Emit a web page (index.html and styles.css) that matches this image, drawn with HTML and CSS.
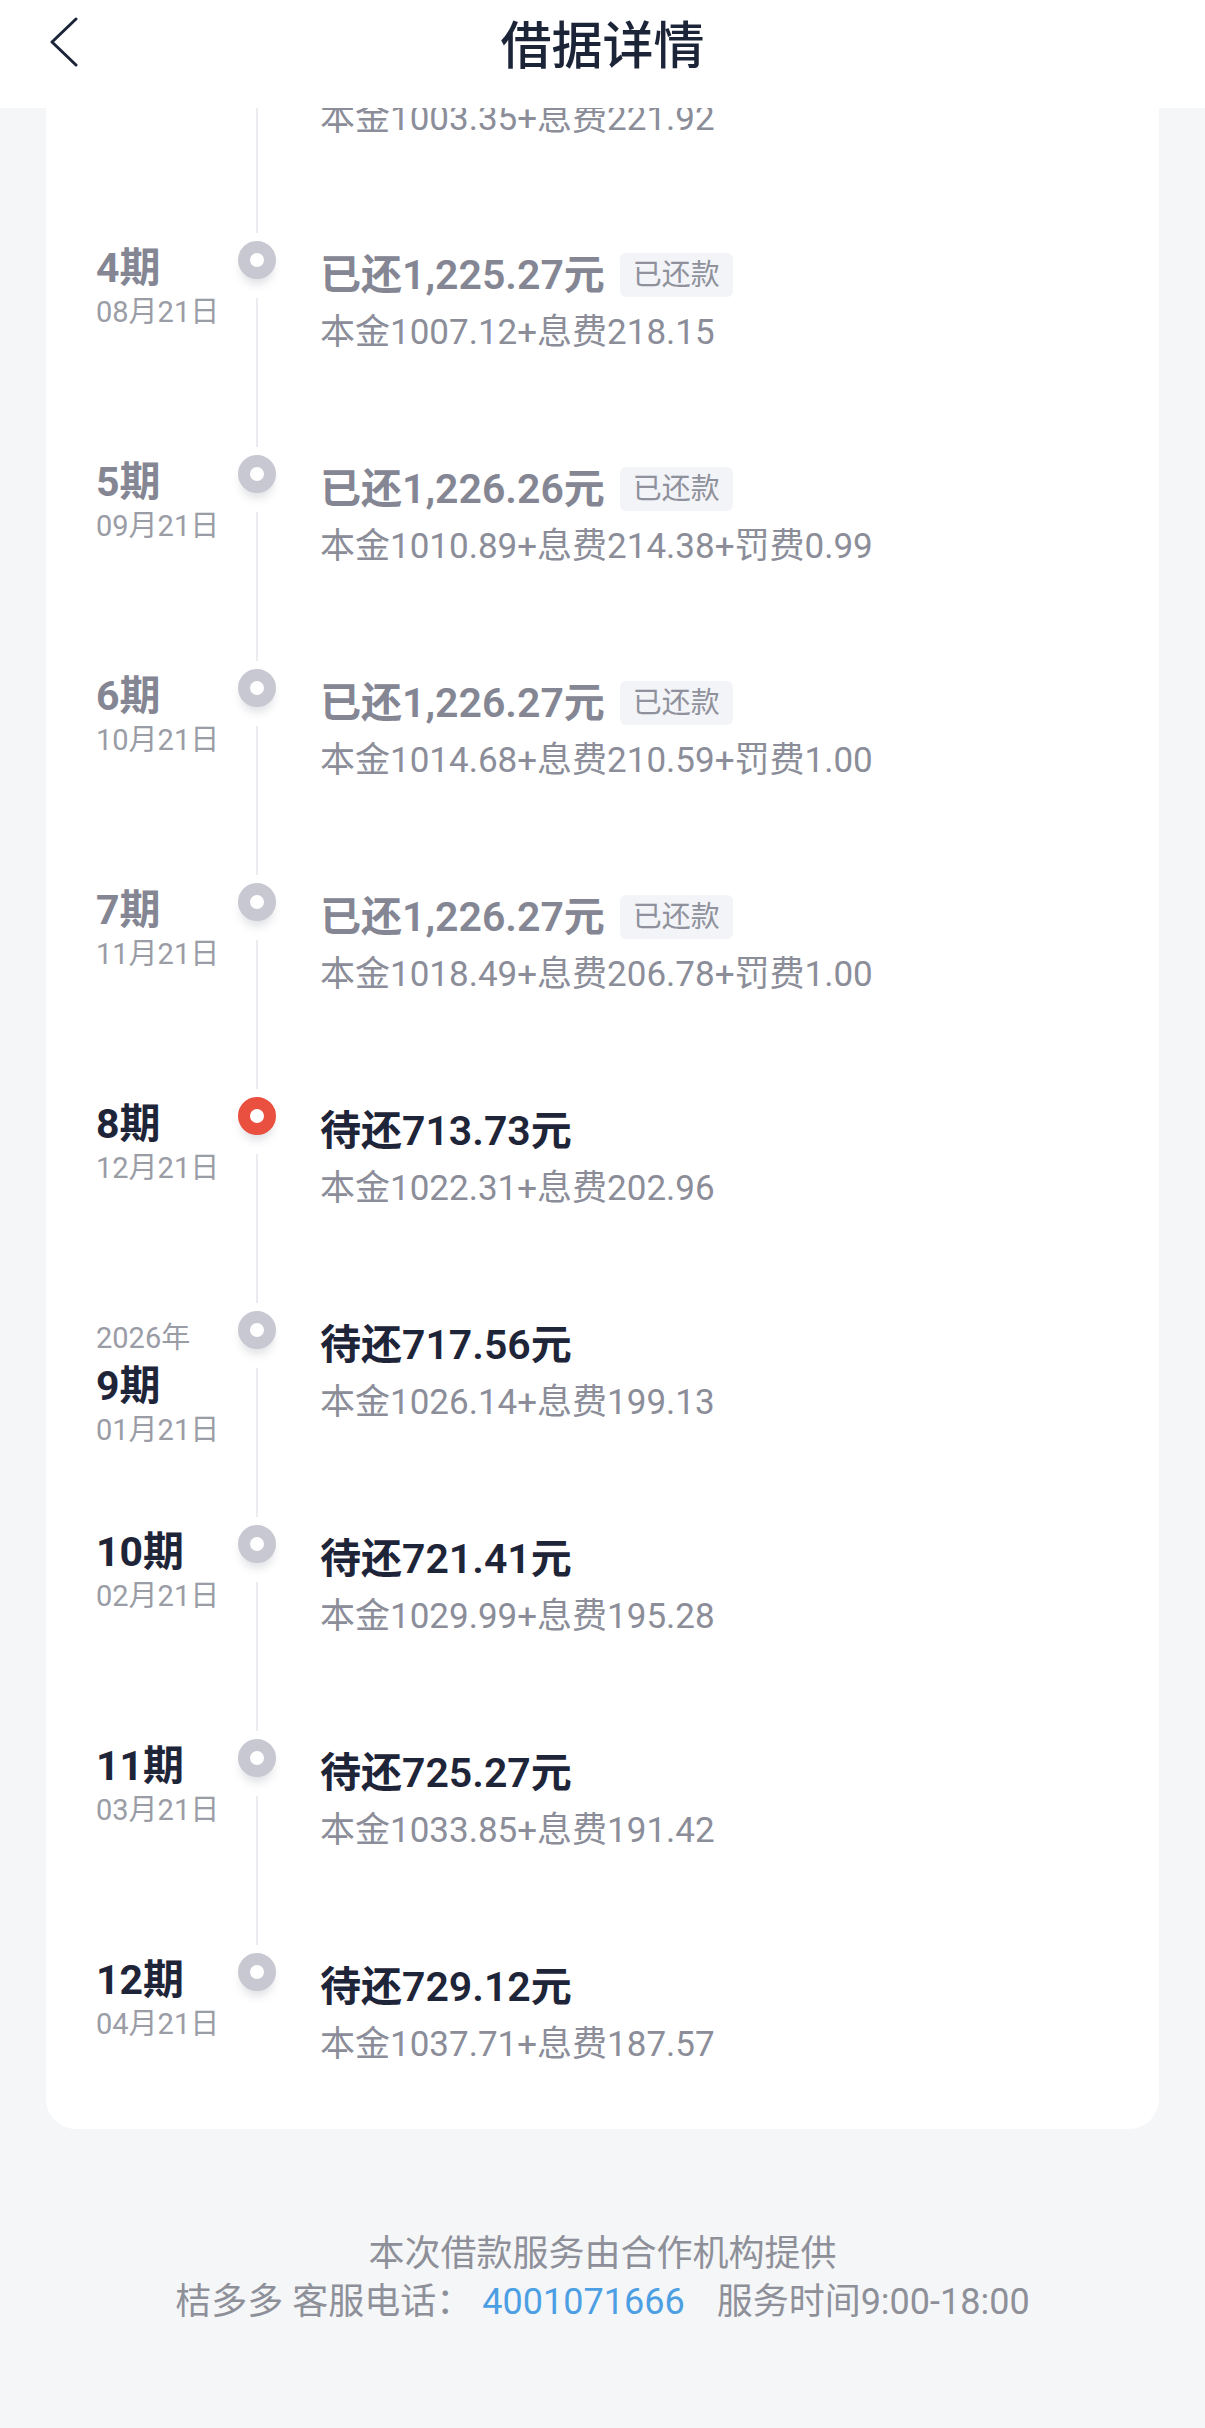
FILE: index.html
```html
<!DOCTYPE html>
<html lang="zh-CN">
<head>
  <meta charset="UTF-8" />
  <meta name="viewport" content="width=device-width, initial-scale=1.0"/>
  <title>借据详情</title>
  <link rel="stylesheet" href="styles.css">
</head>
<body>
  <header class="topbar">
    <a class="back" href="#">
      <svg width="30" height="50" viewBox="0 0 30 50"><path d="M27 2 L3 25 L27 48" fill="none" stroke="#1c2438" stroke-width="3" stroke-linecap="round" stroke-linejoin="round"/></svg>
    </a>
    <h1>借据详情</h1>
    <span></span>
  </header>

  <main class="page">
    <div class="card">
      <!-- 3期 is scrolled up under the bar, only its last line shows -->
      <div class="row paid partial">
        <div class="when"></div>
        <div class="axis"><span class="line"></span></div>
        <div class="info">
          <div class="detail">本金1003.35+息费221.92</div>
        </div>
      </div>
      <div class="row paid">
        <div class="when"><div class="term">4期</div><div class="date">08月21日</div></div>
        <div class="axis"><span class="dot"></span><span class="line"></span></div>
        <div class="info">
          <div class="amount">已还1,225.27元<span class="tag">已还款</span></div>
          <div class="detail">本金1007.12+息费218.15</div>
        </div>
      </div>
      <div class="row paid">
        <div class="when"><div class="term">5期</div><div class="date">09月21日</div></div>
        <div class="axis"><span class="dot"></span><span class="line"></span></div>
        <div class="info">
          <div class="amount">已还1,226.26元<span class="tag">已还款</span></div>
          <div class="detail">本金1010.89+息费214.38+罚费0.99</div>
        </div>
      </div>
      <div class="row paid">
        <div class="when"><div class="term">6期</div><div class="date">10月21日</div></div>
        <div class="axis"><span class="dot"></span><span class="line"></span></div>
        <div class="info">
          <div class="amount">已还1,226.27元<span class="tag">已还款</span></div>
          <div class="detail">本金1014.68+息费210.59+罚费1.00</div>
        </div>
      </div>
      <div class="row paid">
        <div class="when"><div class="term">7期</div><div class="date">11月21日</div></div>
        <div class="axis"><span class="dot"></span><span class="line"></span></div>
        <div class="info">
          <div class="amount">已还1,226.27元<span class="tag">已还款</span></div>
          <div class="detail">本金1018.49+息费206.78+罚费1.00</div>
        </div>
      </div>
      <div class="row">
        <div class="when"><div class="term">8期</div><div class="date">12月21日</div></div>
        <div class="axis"><span class="dot now"></span><span class="line"></span></div>
        <div class="info">
          <div class="amount">待还713.73元</div>
          <div class="detail">本金1022.31+息费202.96</div>
        </div>
      </div>
      <div class="row">
        <div class="when"><div class="year">2026年</div><div class="term">9期</div><div class="date">01月21日</div></div>
        <div class="axis"><span class="dot"></span><span class="line"></span></div>
        <div class="info">
          <div class="amount">待还717.56元</div>
          <div class="detail">本金1026.14+息费199.13</div>
        </div>
      </div>
      <div class="row">
        <div class="when"><div class="term">10期</div><div class="date">02月21日</div></div>
        <div class="axis"><span class="dot"></span><span class="line"></span></div>
        <div class="info">
          <div class="amount">待还721.41元</div>
          <div class="detail">本金1029.99+息费195.28</div>
        </div>
      </div>
      <div class="row">
        <div class="when"><div class="term">11期</div><div class="date">03月21日</div></div>
        <div class="axis"><span class="dot"></span><span class="line"></span></div>
        <div class="info">
          <div class="amount">待还725.27元</div>
          <div class="detail">本金1033.85+息费191.42</div>
        </div>
      </div>
      <div class="row">
        <div class="when"><div class="term">12期</div><div class="date">04月21日</div></div>
        <div class="axis"><span class="dot"></span><span class="line"></span></div>
        <div class="info">
          <div class="amount">待还729.12元</div>
          <div class="detail">本金1037.71+息费187.57</div>
        </div>
      </div>
    </div>

    <footer class="footer">
      <p>本次借款服务由合作机构提供</p>
      <p>桔多多 客服电话：<a class="phone" href="#">4001071666</a>服务时间9:00-18:00</p>
    </footer>
  </main>
</body>
</html>
```

FILE: styles.css
```css
:root {
  --bg: #f5f6f8;
  --ink: #1f2538;
  --muted: #8b8d99;
  --paid: #848693;
  --ring: #c7c8d1;
  --red: #e9503f;
  --blue: #4d9fe3;
}

body {
  margin: 0;
  background: var(--bg);
  font-family: Roboto, "Noto Sans CJK SC", sans-serif;
  color: var(--ink);
}

.topbar {
  height: 84px;
  padding-bottom: 24px;
  background: #fff;
  display: grid;
  grid-template-columns: 1fr auto 1fr;
  align-items: center;
}

.back {
  padding-left: 49px;
}

.back svg {
  display: block;
}

.topbar h1 {
  margin: 0;
  font-family: "Noto Sans CJK SC", sans-serif;
  font-size: 51px;
  font-weight: 500;
  line-height: 84px;
  color: #1c2438;
}

.page {
  height: calc(100vh - 108px);
  overflow: hidden;
  padding: 0 46px;
}

.card {
  background: #fff;
  border-radius: 0 0 30px 30px;
  padding: 0 0 61px 50px;
}

.row {
  display: grid;
  grid-template-columns: 142px 38px 1fr;
}

.row.partial {
  height: 133px;
}

.partial .line {
  height: 125px;
  margin: 0 0 8px;
}

.partial .info {
  padding-top: 0;
}

.partial .detail {
  margin-top: -12px;
}

.when {
  padding-top: 3px;
}

.term {
  font-size: 41px;
  font-weight: 700;
  line-height: 48px;
  color: var(--ink);
}

.paid .term {
  color: var(--paid);
}

.year, .date {
  font-size: 29px;
  color: #9a9ca6;
}

.year {
  line-height: 48px;
}

.date {
  line-height: 40px;
}

.axis {
  display: flex;
  flex-direction: column;
  align-items: center;
}

.dot {
  width: 14px;
  height: 14px;
  border: 12px solid var(--ring);
  border-radius: 50%;
  background: #fff;
  box-shadow: 0 8px 10px -3px rgba(70, 75, 100, 0.18);
}

.dot.now {
  border-color: var(--red);
}

.line {
  width: 2px;
  height: 149px;
  margin: 19px 0 8px;
  background: #ebecef;
}

.row:last-child .line {
  display: none;
}

.info {
  padding: 6px 0 0 44px;
}

.amount {
  display: flex;
  align-items: center;
  font-size: 41px;
  font-weight: 600;
  line-height: 56px;
  color: var(--ink);
}

.paid .amount {
  color: var(--paid);
}

.tag {
  margin-left: 15px;
  padding: 0 13px;
  font-size: 29px;
  font-weight: 400;
  line-height: 44px;
  background: #f3f4f7;
  border-radius: 6px;
  color: #8f919c;
}

.detail {
  margin-top: 7px;
  font-size: 35px;
  line-height: 46px;
  color: var(--muted);
}

.footer {
  margin-top: 101px;
  text-align: center;
  font-size: 36px;
  line-height: 48px;
  color: #8e9099;
}

.footer p {
  margin: 0;
}

.phone {
  margin: 0 32px 0 10px;
  color: var(--blue);
  text-decoration: none;
}
```
